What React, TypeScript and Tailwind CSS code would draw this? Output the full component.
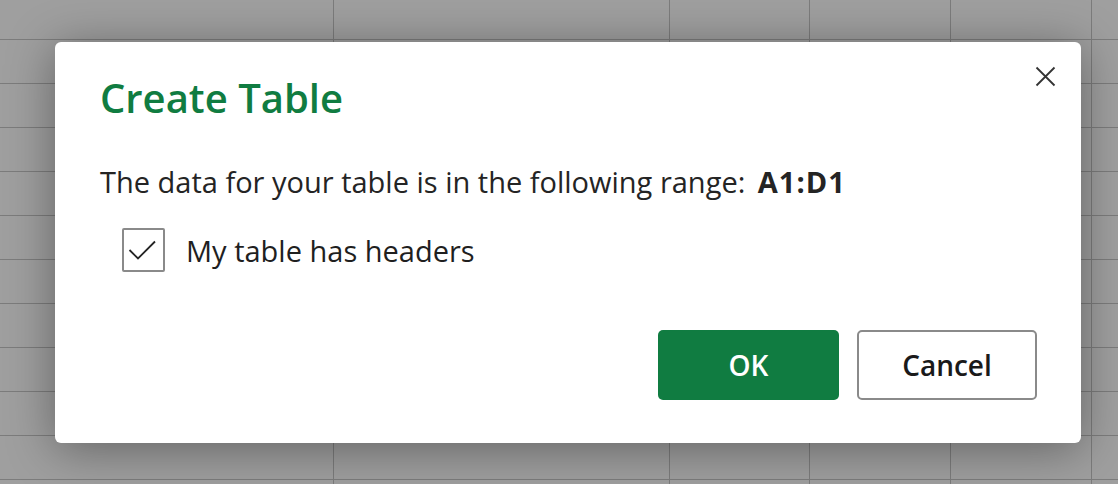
const rows = Array.from({ length: 11 }, (_, i) => i)

function SheetRow({ first }: { first?: boolean }) {
  return (
    <div className={`flex shrink-0 border-b border-[#7c7c7c] ${first ? 'h-[40px]' : 'h-[44px]'}`}>
      <div className="w-[334px] shrink-0 border-r border-[#7c7c7c]" />
      <div className="w-[336px] shrink-0 border-r border-[#7c7c7c]" />
      <div className="w-[140px] shrink-0 border-r border-[#7c7c7c]" />
      <div className="w-[141px] shrink-0 border-r border-[#7c7c7c]" />
      <div className="w-[141px] shrink-0 border-r border-[#7c7c7c]" />
      <div className="flex-1" />
    </div>
  )
}

function CloseIcon() {
  return (
    <svg width="21" height="21" viewBox="0 0 21 21" fill="none" stroke="#333333" strokeWidth="1.8">
      <path d="M1.5 1.5L19.5 19.5M19.5 1.5L1.5 19.5" />
    </svg>
  )
}

function CheckIcon() {
  return (
    <svg width="39" height="40" viewBox="0 0 39 40" fill="none" stroke="#242424" strokeWidth="1.8">
      <path d="M5.5 20L14 28.5L31 11.5" />
    </svg>
  )
}

export default function App() {
  return (
    <div className="relative h-[484px] w-[1118px] overflow-hidden bg-[#9f9f9f] font-['Open_Sans',sans-serif]">
      <div className="flex flex-col">
        <SheetRow first />
        {rows.map((r) => (
          <SheetRow key={r} />
        ))}
      </div>

      <div className="absolute left-[55px] top-[42px] flex w-[1026px] flex-col rounded-[6px] bg-white pl-[45px] pr-[44px] pt-[32px] pb-[43px] shadow-[0_6px_48px_rgba(0,0,0,0.38)]">
        <button type="button" className="absolute right-[25px] top-[24px] flex" aria-label="Close">
          <CloseIcon />
        </button>

        <h2 className="text-[40px] font-semibold leading-[48px] text-[#107c41]">Create Table</h2>

        <p className="mt-[42px] text-[29px] leading-[36px] text-[#242424]">
          The data for your table is in the following range:{' '}
          <span className="ml-[5px] font-bold tracking-[1px]">A1:D1</span>
        </p>

        <label className="mt-[28px] flex h-[44px] items-center pl-[22px]">
          <span className="flex h-[44px] w-[43px] shrink-0 rounded-[2px] border-2 border-[#8a8a8a]">
            <CheckIcon />
          </span>
          <span className="ml-[21px] pt-[1px] text-[29px] leading-[44px] text-[#1f1f1f]">My table has headers</span>
        </label>

        <div className="mt-[58px] flex justify-end gap-[18px]">
          <button
            type="button"
            className="h-[70px] w-[181px] rounded-[5px] bg-[#107c41] text-[28px] font-semibold text-white"
          >
            OK
          </button>
          <button
            type="button"
            className="h-[70px] w-[180px] rounded-[5px] border-2 border-[#8a8a8a] bg-white text-[28px] font-semibold text-[#1a1a1a]"
          >
            Cancel
          </button>
        </div>
      </div>
    </div>
  )
}
